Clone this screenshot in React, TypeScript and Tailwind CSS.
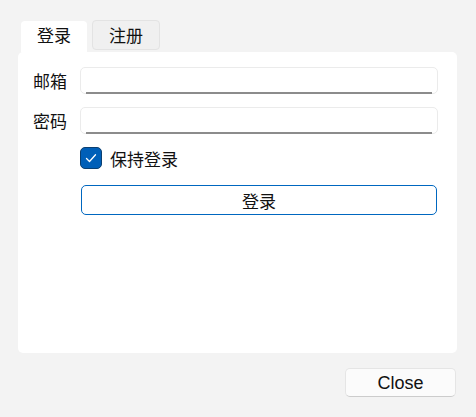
import React from "react";

const cjk = { fontFamily: '"Noto Sans CJK SC", "Noto Sans", sans-serif' };

const Field = ({ label }: { label: string }) => (
  <div className="flex items-center h-[27px]">
    <span className="w-[47px] text-[17px] leading-none text-[#111111]">{label}</span>
    <div className="flex flex-col justify-end w-[358px] h-[27px] rounded-[5px] border border-[#ebebeb] bg-white">
      <div className="mx-[5px] h-[2px] bg-[#8c8c8c] translate-y-px" />
    </div>
  </div>
);

const App = () => {
  return (
    <div className="w-[476px] h-[417px] bg-[#f3f3f3] text-[#111111]" style={cjk}>
      <div className="pl-[18px] pt-[20px]">
        {/* tabs */}
        <div className="flex items-start pl-[3px]">
          <div className="mt-[1px] w-[66px] h-[31px] bg-white rounded-t-[4px] flex justify-center pt-[1px] text-[17px] leading-[26px]">
            登录
          </div>
          <div className="ml-[5px] w-[68px] h-[30px] bg-[#f0f0f0] border border-[#e3e3e3] rounded-[4px] flex justify-center text-[17px] leading-[27px]">
            注册
          </div>
        </div>
        {/* panel */}
        <div className="w-[439px] h-[301px] bg-white rounded-[5px] pt-[15px] pl-[15px] flex flex-col">
          <div className="flex flex-col gap-[13px]">
            <Field label="邮箱" />
            <Field label="密码" />
          </div>
          <label className="flex items-center mt-[13px] ml-[47px] h-[22px]">
            <span className="w-[22px] h-[22px] rounded-[5px] bg-[#005fb8] border border-[#0b3f70] flex items-center justify-center">
              <svg width="14" height="14" viewBox="0 0 14 14" fill="none">
                <path d="M2.5 7.5 L5.5 10.5 L11.5 3.8" stroke="white" strokeWidth="1.3" strokeLinecap="round" strokeLinejoin="round" />
              </svg>
            </span>
            <span className="ml-[8px] text-[17px] leading-none">保持登录</span>
          </label>
          <button className="mt-[16px] ml-[48px] w-[356px] h-[30px] rounded-[5px] border-[1.5px] border-[#0067c0] bg-white text-[17px] leading-none">
            登录
          </button>
        </div>
        {/* footer */}
        <div className="flex justify-end w-[438px] mt-[15px]">
          <button
            className="w-[111px] h-[29px] rounded-[5px] bg-[#fbfbfb] border border-[#e5e5e5] border-b-[#cccccc] text-[18px] leading-none"
            style={{ fontFamily: '"Liberation Sans", "Noto Sans", sans-serif' }}
          >
            Close
          </button>
        </div>
      </div>
    </div>
  );
};

export default App;
